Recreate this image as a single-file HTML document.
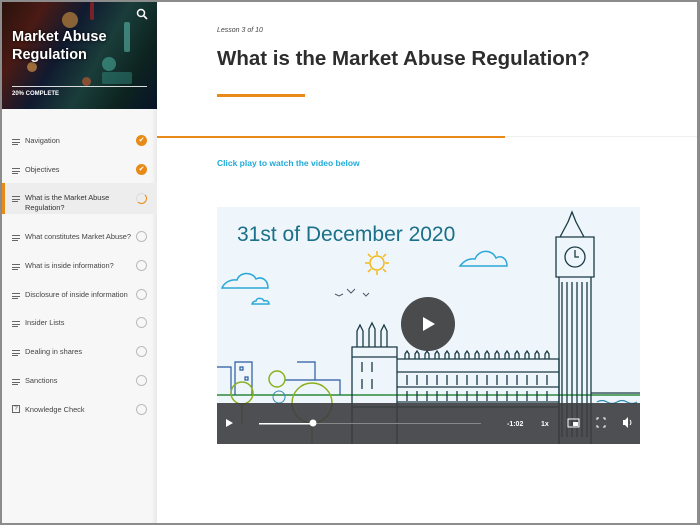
<!DOCTYPE html>
<html><head><meta charset="utf-8"><style>
*{margin:0;padding:0;box-sizing:border-box}
html,body{width:700px;height:525px;overflow:hidden;background:#fff;font-family:"Liberation Sans",sans-serif}
.frame{position:absolute;left:0;top:0;width:700px;height:525px;border:2px solid #8c8c8c;border-right-width:3px}
.side{position:absolute;left:2px;top:2px;width:155px;height:521px;background:#f7f7f7;box-shadow:inset -6px 0 6px -4px rgba(0,0,0,.08)}
.hdr{position:absolute;left:0;top:0;width:155px;height:107px;background:linear-gradient(120deg,#2a120c 0%,#4a1a14 20%,#101a30 40%,#1a3d3a 60%,#0d2420 80%,#081428 100%);overflow:hidden}
.hdr .d{position:absolute;border-radius:50%;opacity:.55}
.hdr h1{position:absolute;left:10px;top:26px;color:#fff;font-size:14.5px;line-height:18px;font-weight:bold;text-shadow:0 0 3px #000}
.hdr .bar{position:absolute;left:10px;top:84px;width:135px;height:1px;background:#ddd}
.hdr .pc{position:absolute;left:10px;top:89px;color:#fff;font-size:6px;font-weight:bold}
.it{position:absolute;left:0;width:155px;font-size:7.4px;color:#444}
.it .ic{position:absolute;left:10px;width:8px}
.it .ic i{display:block;height:1px;background:#666;margin-bottom:1.5px}
.it .t{position:absolute;left:23px}
.it .c{position:absolute;left:134px;width:11px;height:11px;border-radius:50%;border:1px solid #bbb}
.it .c.ok{background:#e88a17;border-color:#e88a17;color:#fff;font-size:7px;text-align:center;line-height:10px}
</style></head><body>
<div class="side">
<div class="hdr">
<div class="d" style="left:60px;top:10px;width:16px;height:16px;background:#e8a040"></div>
<div class="d" style="left:25px;top:60px;width:10px;height:10px;background:#ffb050"></div>
<div class="d" style="left:100px;top:55px;width:14px;height:14px;background:#4ab0a0"></div>
<div class="d" style="left:80px;top:75px;width:9px;height:9px;background:#e06030"></div>
<div class="d" style="left:122px;top:20px;width:6px;height:30px;background:#60c0b0;border-radius:2px"></div>
<div class="d" style="left:88px;top:0;width:4px;height:18px;background:#d02020;border-radius:2px"></div>
<div class="d" style="left:100px;top:70px;width:30px;height:12px;background:#40b0a0;border-radius:2px;opacity:.35"></div>
<h1>Market Abuse<br>Regulation</h1>
<svg style="position:absolute;left:134px;top:6px" width="12" height="12" viewBox="0 0 12 12"><circle cx="5" cy="5" r="3.5" stroke="#fff" stroke-width="1.5" fill="none"/><path d="M7.5 7.5L11 11" stroke="#fff" stroke-width="1.6"/></svg>
<div class="bar"></div><div class="pc">20% COMPLETE</div>
</div>
<div style="position:absolute;left:0;top:181px;width:155px;height:31px;background:#ededed;border-left:3px solid #e88a17"></div>
<div class="it" style="top:134px"><div class="ic" style="top:3px"><i></i><i></i><i style="width:6px"></i></div><span class="t">Navigation</span><span class="c ok" style="top:-1px">✔</span></div>
<div class="it" style="top:163px"><div class="ic" style="top:3px"><i></i><i></i><i style="width:6px"></i></div><span class="t">Objectives</span><span class="c ok" style="top:-1px">✔</span></div>
<div class="it" style="top:191px;color:#333"><div class="ic" style="top:3px"><i></i><i></i><i style="width:6px"></i></div><span class="t" style="line-height:10px">What is the Market Abuse<br>Regulation?</span><span class="c" style="top:0;border:1.5px solid #ddd;border-right-color:#e88a17;border-bottom-color:#e88a17"></span></div>
<div class="it" style="top:230px"><div class="ic" style="top:3px"><i></i><i></i><i style="width:6px"></i></div><span class="t">What constitutes Market Abuse?</span><span class="c" style="top:-1px"></span></div>
<div class="it" style="top:259px"><div class="ic" style="top:3px"><i></i><i></i><i style="width:6px"></i></div><span class="t">What is inside information?</span><span class="c" style="top:-1px"></span></div>
<div class="it" style="top:288px"><div class="ic" style="top:3px"><i></i><i></i><i style="width:6px"></i></div><span class="t">Disclosure of inside information</span><span class="c" style="top:-1px"></span></div>
<div class="it" style="top:316px"><div class="ic" style="top:3px"><i></i><i></i><i style="width:6px"></i></div><span class="t">Insider Lists</span><span class="c" style="top:-1px"></span></div>
<div class="it" style="top:345px"><div class="ic" style="top:3px"><i></i><i></i><i style="width:6px"></i></div><span class="t">Dealing in shares</span><span class="c" style="top:-1px"></span></div>
<div class="it" style="top:374px"><div class="ic" style="top:3px"><i></i><i></i><i style="width:6px"></i></div><span class="t">Sanctions</span><span class="c" style="top:-1px"></span></div>
<div class="it" style="top:403px"><span class="ic" style="top:0;width:8px;height:8px;border:1px solid #666;font-size:6px;text-align:center;line-height:6px">?</span><span class="t">Knowledge Check</span><span class="c" style="top:-1px"></span></div>
</div>

<div style="position:absolute;left:217px;top:27px;font-size:7px;font-style:italic;color:#444">Lesson 3 of 10</div>
<div style="position:absolute;left:217px;top:47px;font-size:20.5px;font-weight:bold;color:#2d2d2d">What is the Market Abuse Regulation?</div>
<div style="position:absolute;left:217px;top:94px;width:88px;height:3px;background:#e88a17"></div>
<div style="position:absolute;left:157px;top:136px;width:540px;height:1px;background:#f0f0f0"></div>
<div style="position:absolute;left:157px;top:136px;width:348px;height:1.5px;background:#e88a17"></div>
<div style="position:absolute;left:217px;top:158px;font-size:8.5px;font-weight:bold;color:#1eaad8">Click play to watch the video below</div>

<svg style="position:absolute;left:217px;top:207px" width="423" height="237" viewBox="0 0 423 237">
<rect width="423" height="237" fill="#eef6fb"/>
<text x="20" y="34" font-family="Liberation Sans,sans-serif" font-size="21" fill="#1a7088">31st of December 2020</text>
<g stroke="#f2b81c" stroke-width="1.5" fill="none"><circle cx="160" cy="56" r="7"/><path d="M160 44v4M160 64v4M148 56h4M168 56h4M151 47l3 3M166 62l3 3M169 47l-3 3M154 62l-3 3"/></g>
<g stroke="#2aa8d8" stroke-width="1.5" fill="none"><path d="M5 81h46c0-8-6-12-12-9-3-7-16-8-19 1-7-1-13 3-15 8z"/><path d="M243 59h47c0-8-6-11-11-8-4-9-17-9-21 1-7-1-12 3-15 7z"/><path d="M35 97h17c0-3-3-4-5-3-2-4-8-3-8 0-2 0-4 2-4 3z"/></g>
<g stroke="#556" stroke-width="1" fill="none"><path d="M118 87l4 2 4-2M130 82l4 4 4-4M146 86l3 3 3-3"/></g>
<path d="M0 188h423" stroke="#2a8a3a" stroke-width="1.5"/>
<g stroke="#2a5aa0" stroke-width="1.2" fill="none"><path d="M0 160h14v28M18 188v-33h17v33M80 155h18v18M68 173h55v15"/><rect x="23" y="160" width="3" height="3"/><rect x="28" y="170" width="3" height="3"/></g>
<g stroke="#1a3a44" stroke-width="1.3" fill="none">
<path d="M135 237V140h45v97M180 237V152h162v85M135 150h45M180 165h162M180 180h162M180 195h162M135 200h207"/>
<path d="M342 237V70h32v167M339 70h38v-40h-38zM343 30l8-15 4-10 4 10 8 15"/>
<circle cx="358" cy="50" r="10"/><path d="M358 43v7h4"/>
<path d="M345 75v155M350 75v155M355 75v155M360 75v155M365 75v155M370 75v155"/>
<path d="M140 140v-16l3-6 3 6v16M152 140v-18l3-6 3 6v18M164 140v-16l3-6 3 6v16"/>
<path d="M145 155v10M155 155v10M145 172v10M155 172v10"/>
<path d="M188 152v-5l2-3 2 3v5M198 152v-5l2-3 2 3v5M208 152v-5l2-3 2 3v5M218 152v-5l2-3 2 3v5M228 152v-5l2-3 2 3v5M238 152v-5l2-3 2 3v5M248 152v-5l2-3 2 3v5M258 152v-5l2-3 2 3v5M268 152v-5l2-3 2 3v5M278 152v-5l2-3 2 3v5M288 152v-5l2-3 2 3v5M298 152v-5l2-3 2 3v5M308 152v-5l2-3 2 3v5M318 152v-5l2-3 2 3v5M328 152v-5l2-3 2 3v5"/>
<path d="M190 168v10M200 168v10M210 168v10M220 168v10M230 168v10M240 168v10M250 168v10M260 168v10M270 168v10M280 168v10M290 168v10M300 168v10M310 168v10M320 168v10M330 168v10"/>
<path d="M190 184v10M200 184v10M210 184v10M220 184v10M230 184v10M240 184v10M250 184v10M260 184v10M270 184v10M280 184v10M290 184v10M300 184v10M310 184v10M320 184v10M330 184v10"/>
<path d="M374 186h49"/></g>
<g stroke="#2a8ab0" stroke-width="1.2" fill="none"><path d="M380 195q5-3 10 0t10 0 10 0 10 0"/></g>
<g stroke="#8ab020" stroke-width="1.5" fill="none"><circle cx="25" cy="186" r="11"/><circle cx="60" cy="172" r="8"/><circle cx="95" cy="196" r="20"/><path d="M25 197v20M95 216v20"/></g>
<circle cx="62" cy="190" r="6" stroke="#3a8ab0" fill="none"/>
<rect y="196" width="423" height="41" fill="#3c3d3f" opacity=".9"/>
<circle cx="211" cy="117" r="27" fill="#3c3d3f" opacity=".93"/>
<path d="M206 110v14l12-7z" fill="#fff"/>
<path d="M9 212v8l7-4z" fill="#fff"/>
<rect x="42" y="216" width="222" height="1" fill="#888"/><rect x="42" y="216" width="54" height="1.5" fill="#fff"/><circle cx="96" cy="216" r="3.5" fill="#fff"/>
<text x="290" y="219" font-family="Liberation Sans,sans-serif" font-size="7" fill="#fff" font-weight="bold">-1:02</text>
<text x="324" y="219" font-family="Liberation Sans,sans-serif" font-size="7" fill="#fff" font-weight="bold">1x</text>
<rect x="351" y="212" width="11" height="8" fill="none" stroke="#fff"/><rect x="356" y="215" width="5" height="4" fill="#fff"/>
<path d="M380 213v-2h2M386 211h2v2M388 218v2h-2M382 220h-2v-2" stroke="#fff" fill="none"/>
<path d="M406 213h2l3-3v11l-3-3h-2z" fill="#fff"/><path d="M413 213q2 2.5 0 5" stroke="#fff" fill="none"/>
</svg>
<div class="frame"></div>
</body></html>
